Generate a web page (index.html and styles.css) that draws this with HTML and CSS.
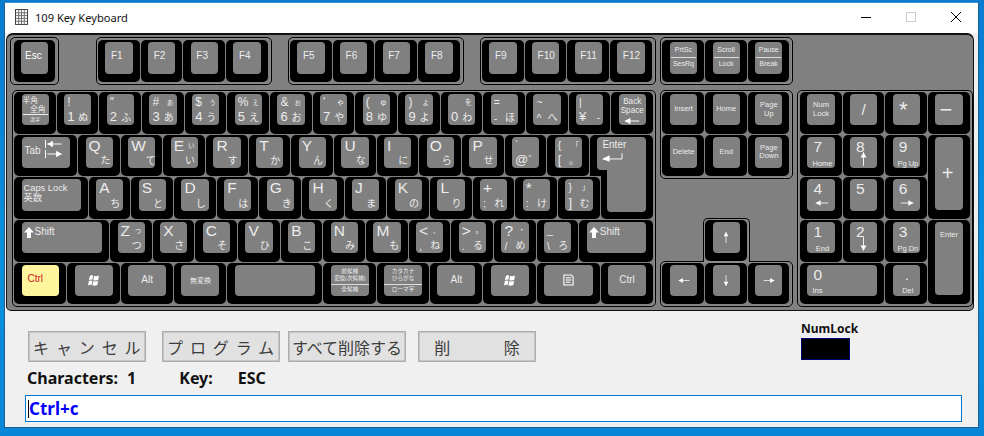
FILE: index.html
```html
<!DOCTYPE html>
<html lang="ja">
<head>
<meta charset="utf-8">
<title>109 Key Keyboard</title>
<link rel="stylesheet" href="styles.css">
</head>
<body>
<svg class="defs" width="0" height="0" aria-hidden="true">
  <symbol id="ar" viewBox="0 0 20 10"><path d="M1 5H19" stroke="#fff" stroke-width="1.2" fill="none"/><path d="M1 5L8 1V9Z" fill="#fff"/></symbol>
  <symbol id="fat" viewBox="0 0 10 11"><path d="M5 0L10 5.5H7V11H3V5.5H0Z" fill="#fff"/></symbol>
  <symbol id="win" viewBox="0 0 14 14"><path d="M3 2.2Q5 1 6.6 1.7L5.8 6.3Q4 5.6 2 6.7ZM7.6 2Q9.6 3 12.9 1.6L12.2 6.2Q9 7.5 6.9 6.6ZM1.9 7.7Q4 6.6 5.7 7.3L4.9 12Q3 11.2 1 12.3ZM6.7 7.6Q9 8.5 12 7.2L11.2 11.9Q8.5 13.2 5.9 12.2Z" fill="#fff"/></symbol>
  <symbol id="menu" viewBox="0 0 12 13"><path d="M1 1H9L11 3V12H1Z" fill="none" stroke="#fff" stroke-width="1.2"/><path d="M3 4H9M3 6.5H9M3 9H8" stroke="#fff" stroke-width="1.1"/></symbol>
</svg>
<div class="window">
  <header class="titlebar">
    <svg class="appicon" viewBox="0 0 14 17" aria-hidden="true"><rect x=".5" y=".5" width="13" height="16" fill="#fff" stroke="#333"/><path d="M1 4H13M1 7H13M1 10H13M1 13H13M4 1V16M7 1V16M10 1V16" stroke="#666"/></svg>
    <span class="title">109 Key Keyboard</span>
    <div class="winctl">
      <svg class="min" viewBox="0 0 10 10" aria-hidden="true"><path d="M0 5.5H10" stroke="#000"/></svg>
      <svg class="max" viewBox="0 0 10 10" aria-hidden="true"><rect x=".5" y=".5" width="9" height="9" fill="none" stroke="#ccc"/></svg>
      <svg class="close" viewBox="0 0 10 10" aria-hidden="true"><path d="M0 0L10 10M10 0L0 10" stroke="#000"/></svg>
    </div>
  </header>

  <section class="keyboard">
    <div class="toprow">
      <div class="cluster esc">
        <div class="row"><div class="cell u1"><div class="cap"><span class="ml fn esclabel">Esc</span></div></div></div>
      </div>
      <div class="cluster fkeys first">
        <div class="row">
          <div class="cell u1"><div class="cap"><span class="ml fn fk">F1</span></div></div>
          <div class="cell u1"><div class="cap"><span class="ml fn fk">F2</span></div></div>
          <div class="cell u1"><div class="cap"><span class="ml fn fk">F3</span></div></div>
          <div class="cell u1"><div class="cap"><span class="ml fn fk">F4</span></div></div>
        </div>
      </div>
      <div class="cluster fkeys">
        <div class="row">
          <div class="cell u1"><div class="cap"><span class="ml fn fk">F5</span></div></div>
          <div class="cell u1"><div class="cap"><span class="ml fn fk">F6</span></div></div>
          <div class="cell u1"><div class="cap"><span class="ml fn fk">F7</span></div></div>
          <div class="cell u1"><div class="cap"><span class="ml fn fk">F8</span></div></div>
        </div>
      </div>
      <div class="cluster fkeys">
        <div class="row">
          <div class="cell u1"><div class="cap"><span class="ml fn fk">F9</span></div></div>
          <div class="cell u1"><div class="cap"><span class="ml fn fk">F10</span></div></div>
          <div class="cell u1"><div class="cap"><span class="ml fn fk">F11</span></div></div>
          <div class="cell u1"><div class="cap"><span class="ml fn fk">F12</span></div></div>
        </div>
      </div>
      <div class="cluster sys">
        <div class="row">
          <div class="cell u1"><div class="cap stack"><span>PrtSc</span><span class="split">SesRq</span></div></div>
          <div class="cell u1"><div class="cap stack"><span>Scroll</span><span class="split">Lock</span></div></div>
          <div class="cell u1"><div class="cap stack"><span>Pause</span><span class="split">Break</span></div></div>
        </div>
      </div>
    </div>

    <div class="lower">
      <div class="cluster main">
        <div class="row">
          <div class="cell u1"><div class="cap hankaku"><span class="h1">半角</span><span class="h2">全角</span><span class="h3">漢字</span></div></div>
          <div class="cell u1"><div class="cap"><span class="tl sym">!</span><span class="bl num">1</span><span class="br kana">ぬ</span></div></div>
          <div class="cell u1"><div class="cap"><span class="tl sym">″</span><span class="bl num">2</span><span class="br kana">ふ</span></div></div>
          <div class="cell u1"><div class="cap"><span class="tl sym">#</span><span class="tr tiny">ぁ</span><span class="bl num">3</span><span class="br kana">あ</span></div></div>
          <div class="cell u1"><div class="cap"><span class="tl sym">$</span><span class="tr tiny">ぅ</span><span class="bl num">4</span><span class="br kana">う</span></div></div>
          <div class="cell u1"><div class="cap"><span class="tl sym">%</span><span class="tr tiny">ぇ</span><span class="bl num">5</span><span class="br kana">え</span></div></div>
          <div class="cell u1"><div class="cap"><span class="tl sym">&amp;</span><span class="tr tiny">ぉ</span><span class="bl num">6</span><span class="br kana">お</span></div></div>
          <div class="cell u1"><div class="cap"><span class="tl sym">'</span><span class="tr tiny">ゃ</span><span class="bl num">7</span><span class="br kana">や</span></div></div>
          <div class="cell u1"><div class="cap"><span class="tl sym">(</span><span class="tr tiny">ゅ</span><span class="bl num">8</span><span class="br kana">ゆ</span></div></div>
          <div class="cell u1"><div class="cap"><span class="tl sym">)</span><span class="tr tiny">ょ</span><span class="bl num">9</span><span class="br kana">よ</span></div></div>
          <div class="cell u1"><div class="cap"><span class="tr tiny">を</span><span class="bl num">0</span><span class="br kana">わ</span></div></div>
          <div class="cell u1"><div class="cap"><span class="tl small">=</span><span class="bl small">-</span><span class="br kana">ほ</span></div></div>
          <div class="cell u1"><div class="cap"><span class="tl small">~</span><span class="bl small">^</span><span class="br kana">へ</span></div></div>
          <div class="cell u1"><div class="cap"><span class="tl small">|</span><span class="bl num">¥</span><span class="br kana">-</span></div></div>
          <div class="cell u1"><div class="cap bs"><span>Back</span><span>Space</span><svg class="arrow wide" aria-hidden="true"><use href="#ar"/></svg></div></div>
        </div>
        <div class="row">
          <div class="cell u15"><div class="cap tab"><span class="fn">Tab</span><span class="tabarrows"><svg class="arrow wide flipbar" aria-hidden="true"><use href="#ar"/></svg><svg class="arrow wide right bar" aria-hidden="true"><use href="#ar"/></svg></span></div></div>
          <div class="cell u1"><div class="cap"><span class="tl big">Q</span><span class="br kana">た</span></div></div>
          <div class="cell u1"><div class="cap"><span class="tl big">W</span><span class="br kana">て</span></div></div>
          <div class="cell u1"><div class="cap"><span class="tl big">E</span><span class="tr tiny">ぃ</span><span class="br kana">い</span></div></div>
          <div class="cell u1"><div class="cap"><span class="tl big">R</span><span class="br kana">す</span></div></div>
          <div class="cell u1"><div class="cap"><span class="tl big">T</span><span class="br kana">か</span></div></div>
          <div class="cell u1"><div class="cap"><span class="tl big">Y</span><span class="br kana">ん</span></div></div>
          <div class="cell u1"><div class="cap"><span class="tl big">U</span><span class="br kana">な</span></div></div>
          <div class="cell u1"><div class="cap"><span class="tl big">I</span><span class="br kana">に</span></div></div>
          <div class="cell u1"><div class="cap"><span class="tl big">O</span><span class="br kana">ら</span></div></div>
          <div class="cell u1"><div class="cap"><span class="tl big">P</span><span class="br kana">せ</span></div></div>
          <div class="cell u1"><div class="cap"><span class="tl small">`</span><span class="bl num">@</span><span class="br kana">゛</span></div></div>
          <div class="cell u1"><div class="cap"><span class="tl small">{</span><span class="tr tiny">「</span><span class="bl num">[</span><span class="br kana">。</span></div></div>
          <div class="cell u15 enter-top"><div class="cap enter"><span class="fn">Enter</span><svg class="enterarrow" viewBox="0 0 22 10" aria-hidden="true"><path d="M1 6H21V0" fill="none" stroke="#fff"/><path d="M0 6L8 2V9Z" fill="#fff"/></svg></div></div>
        </div>
        <div class="row">
          <div class="cell u175"><div class="cap caps"><span>Caps Lock</span><span>英数</span></div></div>
          <div class="cell u1"><div class="cap"><span class="tl big">A</span><span class="br kana">ち</span></div></div>
          <div class="cell u1"><div class="cap"><span class="tl big">S</span><span class="br kana">と</span></div></div>
          <div class="cell u1"><div class="cap"><span class="tl big">D</span><span class="br kana">し</span></div></div>
          <div class="cell u1"><div class="cap"><span class="tl big">F</span><span class="br kana">は</span></div></div>
          <div class="cell u1"><div class="cap"><span class="tl big">G</span><span class="br kana">き</span></div></div>
          <div class="cell u1"><div class="cap"><span class="tl big">H</span><span class="br kana">く</span></div></div>
          <div class="cell u1"><div class="cap"><span class="tl big">J</span><span class="br kana">ま</span></div></div>
          <div class="cell u1"><div class="cap"><span class="tl big">K</span><span class="br kana">の</span></div></div>
          <div class="cell u1"><div class="cap"><span class="tl big">L</span><span class="br kana">り</span></div></div>
          <div class="cell u1"><div class="cap"><span class="tl big">+</span><span class="bl small">;</span><span class="br kana">れ</span></div></div>
          <div class="cell u1"><div class="cap"><span class="tl big">*</span><span class="bl small">:</span><span class="br kana">け</span></div></div>
          <div class="cell u1"><div class="cap"><span class="tl small">}</span><span class="tr tiny">」</span><span class="bl num">]</span><span class="br kana">む</span></div></div>
          <div class="cell u125 enter-bottom"></div>
        </div>
        <div class="row">
          <div class="cell u225"><div class="cap shift"><svg class="fat" aria-hidden="true"><use href="#fat"/></svg><span class="fn">Shift</span></div></div>
          <div class="cell u1"><div class="cap"><span class="tl big">Z</span><span class="tr tiny">っ</span><span class="br kana">つ</span></div></div>
          <div class="cell u1"><div class="cap"><span class="tl big">X</span><span class="br kana">さ</span></div></div>
          <div class="cell u1"><div class="cap"><span class="tl big">C</span><span class="br kana">そ</span></div></div>
          <div class="cell u1"><div class="cap"><span class="tl big">V</span><span class="br kana">ひ</span></div></div>
          <div class="cell u1"><div class="cap"><span class="tl big">B</span><span class="br kana">こ</span></div></div>
          <div class="cell u1"><div class="cap"><span class="tl big">N</span><span class="br kana">み</span></div></div>
          <div class="cell u1"><div class="cap"><span class="tl big">M</span><span class="br kana">も</span></div></div>
          <div class="cell u1"><div class="cap"><span class="tl big">&lt;</span><span class="tr tiny">、</span><span class="bl small">,</span><span class="br kana">ね</span></div></div>
          <div class="cell u1"><div class="cap"><span class="tl big">&gt;</span><span class="tr tiny">。</span><span class="bl small">.</span><span class="br kana">る</span></div></div>
          <div class="cell u1"><div class="cap"><span class="tl big">?</span><span class="tr tiny">・</span><span class="bl small">/</span><span class="br kana">め</span></div></div>
          <div class="cell u1"><div class="cap"><span class="tl small">_</span><span class="bl small">\</span><span class="br kana">ろ</span></div></div>
          <div class="cell u175"><div class="cap shift"><svg class="fat" aria-hidden="true"><use href="#fat"/></svg><span class="fn">Shift</span></div></div>
        </div>
        <div class="row">
          <div class="cell u125"><div class="cap lit"><span class="ml fn">Ctrl</span></div></div>
          <div class="cell u125"><div class="cap center"><svg class="win" aria-hidden="true"><use href="#win"/></svg></div></div>
          <div class="cell u125"><div class="cap center"><span class="fn">Alt</span></div></div>
          <div class="cell u125"><div class="cap center"><span class="mini">無変換</span></div></div>
          <div class="cell u225"><div class="cap"></div></div>
          <div class="cell u125"><div class="cap stackjp"><span>前候補</span><span>変換(次候補)</span><span class="split">全候補</span></div></div>
          <div class="cell u125"><div class="cap stackjp"><span>カタカナ</span><span>ひらがな</span><span class="split">ローマ字</span></div></div>
          <div class="cell u125"><div class="cap center"><span class="fn">Alt</span></div></div>
          <div class="cell u125"><div class="cap center"><svg class="win" aria-hidden="true"><use href="#win"/></svg></div></div>
          <div class="cell u15"><div class="cap center"><svg class="menu" aria-hidden="true"><use href="#menu"/></svg></div></div>
          <div class="cell u125"><div class="cap center"><span class="fn">Ctrl</span></div></div>
        </div>
      </div>

      <div class="navcol">
        <div class="cluster nav grid3">
          <div class="cell"><div class="cap center"><span class="fine">Insert</span></div></div>
          <div class="cell"><div class="cap center"><span class="fine">Home</span></div></div>
          <div class="cell"><div class="cap center"><span class="fine tc">Page<br>Up</span></div></div>
          <div class="cell"><div class="cap center"><span class="fine">Delete</span></div></div>
          <div class="cell"><div class="cap center"><span class="fine">End</span></div></div>
          <div class="cell"><div class="cap center"><span class="fine tc">Page<br>Down</span></div></div>
        </div>
        <div class="arrows">
          <div class="cluster upkey">
            <div class="cell u1"><div class="cap center"><svg class="arrow up" aria-hidden="true"><use href="#ar"/></svg></div></div>
          </div>
          <div class="cluster nav grid3 arrowrow">
            <div class="cell"><div class="cap center"><svg class="arrow" aria-hidden="true"><use href="#ar"/></svg></div></div>
            <div class="cell"><div class="cap center"><svg class="arrow down" aria-hidden="true"><use href="#ar"/></svg></div></div>
            <div class="cell"><div class="cap center"><svg class="arrow right" aria-hidden="true"><use href="#ar"/></svg></div></div>
          </div>
        </div>
      </div>

      <div class="cluster numpad">
        <div class="cell"><div class="cap center"><span class="fine tc">Num<br>Lock</span></div></div>
        <div class="cell"><div class="cap center"><span class="big">/</span></div></div>
        <div class="cell"><div class="cap center"><span class="op">*</span></div></div>
        <div class="cell"><div class="cap center"><span class="op">−</span></div></div>
        <div class="cell"><div class="cap pad"><span class="big">7</span><span class="fine low">Home</span></div></div>
        <div class="cell"><div class="cap pad"><span class="big">8</span><svg class="arrow up padarrow" aria-hidden="true"><use href="#ar"/></svg></div></div>
        <div class="cell"><div class="cap pad"><span class="big">9</span><span class="fine low">Pg Up</span></div></div>
        <div class="cell tall"><div class="cap center"><span class="op plus">+</span></div></div>
        <div class="cell"><div class="cap pad"><span class="big">4</span><svg class="arrow wide lowarrow" aria-hidden="true"><use href="#ar"/></svg></div></div>
        <div class="cell"><div class="cap pad"><span class="big">5</span></div></div>
        <div class="cell"><div class="cap pad"><span class="big">6</span><svg class="arrow wide right lowarrow" aria-hidden="true"><use href="#ar"/></svg></div></div>
        <div class="cell"><div class="cap pad"><span class="big">1</span><span class="fine low">End</span></div></div>
        <div class="cell"><div class="cap pad"><span class="big">2</span><svg class="arrow down padarrow" aria-hidden="true"><use href="#ar"/></svg></div></div>
        <div class="cell"><div class="cap pad"><span class="big">3</span><span class="fine low">Pg Dn</span></div></div>
        <div class="cell tall"><div class="cap top"><span class="fine">Enter</span></div></div>
        <div class="cell span2"><div class="cap pad"><span class="big">0</span><span class="fine low inslabel">Ins</span></div></div>
        <div class="cell"><div class="cap pad dot"><span class="fine">.</span><span class="fine low">Del</span></div></div>
      </div>
    </div>
  </section>

  <section class="controls">
    <div class="leftctl">
      <div class="buttons">
        <button class="btn spaced">キャンセル</button>
        <button class="btn spaced gap16">プログラム</button>
        <button class="btn gap8">すべて削除する</button>
        <button class="btn gap12 wide-word">削 除</button>
      </div>
      <div class="status">
        <span class="label">Characters:</span><span class="value">1</span>
        <span class="label key">Key:</span><span class="value esc-val">ESC</span>
      </div>
    </div>
    <div class="numlock">
      <span class="numlabel">NumLock</span>
      <div class="lamp"></div>
    </div>
  </section>
  <div class="inputbox"><span class="caret"></span><span class="typed">Ctrl+c</span></div>
</div>
</body>
</html>
```
FILE: styles.css
```css
:root { --u: 42.667px; --fg: #ececec; }
* { box-sizing: border-box; }
html, body { margin: 0; height: 100%; }
body {
  width: 984px; height: 436px; overflow: hidden;
  background: linear-gradient(180deg, #0a7cd0 0%, #0a90dc 60%, #0a86d8 100%);
  padding: 2px 0 0 4px;
  font-family: "Liberation Sans", "Noto Sans CJK JP", sans-serif;
}
.defs { position: absolute; }
.window {
  width: 975px; height: 426px;
  background: #f0f0f0;
  border: 1px solid #1b5f8c;
  border-top-color: #3a8fc8;
}
.titlebar {
  height: 30px; background: #fff;
  display: flex; align-items: center;
  padding-left: 10px;
}
.appicon { width: 13px; height: 16px; margin-top: -2px; }
.title { margin-left: 7px; font: 11.1px "Noto Sans", sans-serif; color: #111; margin-top: -2px; }
.winctl { margin-left: auto; display: flex; align-items: center; margin-top: -2px; padding-right: 17px; gap: 35px; }
.winctl svg { width: 10px; height: 10px; display: block; }

.keyboard {
  margin-left: 1px; width: 968px; height: 278px;
  background: #808080;
  border: 1px solid #111;
  border-top-width: 2px;
  border-radius: 7px 7px 5px 5px;
  padding: 2px 0 0 3px;
}
.toprow { display: flex; }
.lower { display: flex; margin: 5.33px 0 0 2px; }

.cluster {
  background: #808080;
  border: 1px solid #000;
  border-radius: 5px;
  box-shadow: inset 0 0 0 1px #8c8c8c;
}
.row { display: flex; }
.cell {
  height: calc(var(--u) - 1px);
  margin: 0 1px 1px 0;
  padding: 2px 7px 0 7.5px;
  background: #000;
  border-radius: 5px;
}
.u1 { width: calc(var(--u) - 1px); }
.u125 { width: calc(var(--u) * 1.25 - 1px); }
.u15 { width: calc(var(--u) * 1.5 - 1px); }
.u175 { width: calc(var(--u) * 1.75 - 1px); }
.u225 { width: calc(var(--u) * 2.25 - 1px); }

.esc { padding: 2px 2px 1px 2.5px; }
.fkeys { padding: 2px 2px 1px 1px; margin-left: 16.33px; }
.fkeys.first { margin-left: 36.83px; }
.sys { padding: 2px 2px 1px 1.5px; margin-left: 4.33px; }
.main { padding: 1px; }

.cap {
  position: relative;
  height: 31.5px;
  background: #808080;
  border-radius: 4px;
  color: var(--fg);
  display: grid;
  grid-template: 1fr 1fr / auto 1fr;
  padding: 1px 2px 2px 3px;
  line-height: 1;
  font-size: 10px;
  overflow: visible;
}
.tl { grid-area: 1 / 1; justify-self: start; }
.tr { grid-area: 1 / 2; justify-self: end; align-self: start; }
.bl { grid-area: 2 / 1; justify-self: start; align-self: end; }
.br { grid-area: 2 / 2; justify-self: end; align-self: end; }
.ml { grid-area: 1 / 1 / 3 / 3; align-self: center; margin-left: 1px; padding-bottom: 2px; }
.fk { margin-left: 2.5px; }
.esclabel { font-size: 9.5px; color: #fff; }
.big { font-size: 15.5px; font-weight: 400; }
.num { font-size: 13px; }
.sym { font-size: 12px; margin-top: 1px; }
.small { font-size: 10.5px; margin-top: 2px; }
.kana { font-size: 10px; margin-right: 1px; }
.tiny { font-size: 7.5px; margin: 4px 1px 0 0; }
.fn { font-size: 10px; }
.fine { font-size: 7.5px; line-height: 1.15; white-space: nowrap; }
.tc { text-align: center; }
.mini { font-size: 7px; }
.center { display: flex; align-items: center; justify-content: center; padding: 0; }
.lit { background: #fff59c; color: #c8141e; }
.lit .fn { margin-left: 3px; }

.stack {
  display: flex; flex-direction: column; align-items: center;
  padding: 4px 0 0; font-size: 7px;
}
.split {
  align-self: stretch; text-align: center;
  border-top: 1px solid #ddd;
  margin: 4px 1px 0; padding-top: 2px;
}
.hankaku { display: flex; flex-direction: column; padding: 2px 1px 0; }
.h1 { font-size: 7.8px; line-height: 9px; }
.h2 { font-size: 7.8px; line-height: 9px; align-self: flex-end; border-bottom: 1px solid #eee; margin: 0 0 1px; width: 100%; text-align: right; padding-right: 2px; }
.h3 { font-size: 5px; line-height: 7px; align-self: center; }
.bs { display: flex; flex-direction: column; align-items: center; padding: 3px 0 0; font-size: 8.2px; line-height: 9.5px; }
.bs .arrow { margin-top: 1px; flex: none; }
.tab { display: flex; padding: 1px 3px 0; gap: 4px; }
.tab .fn { margin-top: 8px; font-size: 10px; }
.tabarrows { display: flex; flex-direction: column; gap: 2px; margin-top: 2px; }
.bar { border-right: 1.5px solid #fff; }
.flipbar { border-left: 1.5px solid #fff; }
.caps { display: flex; flex-direction: column; padding: 5px 0 0 2px; font-size: 9.3px; line-height: 9.5px; }
.shift { display: flex; align-items: flex-start; padding: 5px 0 0 2px; gap: 1px; }
.shift .fn { font-size: 10px; margin-top: 0; }
.fat { width: 10px; height: 11px; }
.win { width: 13px; height: 13px; margin-top: 1px; }
.menu { width: 11px; height: 12px; }
.stackjp {
  display: flex; flex-direction: column; align-items: center;
  font-size: 5.6px; line-height: 7px;
  padding: 3px 0 0;
}
.stackjp .split { margin: 2px 0 0; padding-top: 1px; line-height: 6px; }

.arrow { width: 12px; height: 7px; display: block; }
.wide { width: 18px; height: 8px; }
.right { transform: scaleX(-1); }
.up { transform: rotate(90deg); }
.down { transform: rotate(-90deg); }

.enter-top { position: relative; z-index: 1; border-radius: 5px 5px 0 0; }
.enter-top::after {
  content: ""; position: absolute;
  left: 11px; right: 0; top: 100%; height: 2px; background: #000;
}
.enter {
  display: block; height: 33px; padding: 3px 0 0 5px;
  border-radius: 4px 4px 0 4px;
  z-index: 2;
}
.enter::after {
  content: ""; position: absolute;
  left: 10px; right: 0; top: 100%; height: 42px;
  background: #808080; border-radius: 0 0 4px 4px;
}
.enterarrow { display: block; width: 21px; height: 10px; margin-top: 3px; }
.enter-bottom { border-radius: 0 0 5px 5px; }

.navcol { display: flex; flex-direction: column; margin-left: 4px; width: 133.5px; }
.grid3 {
  display: grid;
  grid-template-columns: repeat(3, var(--u));
  padding: 1px 1px 1px 1.5px;
}
.grid3 .cell { margin: 0 1px 1px 0; }
.arrows { margin-top: auto; display: flex; flex-direction: column; }
.upkey {
  position: relative; z-index: 1;
  align-self: flex-start;
  margin: 0 0 -1.67px 43px;
  padding: 1px 1px 0 1.17px;
  border-bottom: 0;
  border-radius: 5px 5px 0 0;
}
.numpad {
  margin-left: 4px;
  display: grid;
  grid-template-columns: repeat(4, var(--u));
  grid-auto-rows: var(--u);
  padding: 1px 1px 1px 1.5px;
}
.numpad .cell { height: auto; }
.tall { grid-row: span 2; grid-column: 4; }
.tall .cap { height: 73px; }
.span2 { grid-column: span 2; }
.pad { display: flex; flex-direction: column; align-items: flex-start; padding: 2px 2px 0 6px; position: relative; }
.low { margin-top: auto; padding-bottom: 0; align-self: center; margin-left: -1px; }
.inslabel { align-self: flex-start; }
.padarrow { position: absolute; left: 6px; bottom: 5px; width: 15px; height: 8px; }
.lowarrow { margin-top: auto; margin-bottom: 4px; align-self: center; margin-left: -3px; width: 14px; }
.op { font-size: 22px; margin-left: -6px; }
.plus { font-size: 20px; font-weight: 400; margin-left: -3px; }
.top { display: block; padding: 7px 0 0; text-align: center; }
.dot .fine:first-child { font-size: 14px; align-self: center; margin: 0 0 0 -3px; }

.controls {
  display: flex;
  height: 84px;
  padding-left: 23px;
  position: relative;
}
.leftctl { padding-top: 20px; }
.buttons { display: flex; }
.btn {
  width: 118px; height: 31px;
  background: #e1e1e1;
  border: 1px solid #adadad;
  box-shadow: inset 0 0 0 1px #c4c4c4;
  padding: 0;
  font: 16px/1 "Noto Sans CJK JP", sans-serif;
  color: #3c3c3c;
  white-space: nowrap;
}
.spaced { letter-spacing: 6.9px; text-indent: 4px; }
.gap16 { margin-left: 16px; }
.gap8 { margin-left: 8px; }
.gap12 { margin-left: 12px; }
.wide-word { word-spacing: 50px; }
.status {
  display: flex; align-items: baseline;
  margin: 7px 0 0 -1px;
  font: 700 16px/18px "Noto Sans", sans-serif; color: #111;
}
.value { margin-left: 9px; }
.key { margin-left: 43px; }
.esc-val { margin-left: 25px; }
.numlock {
  position: absolute; left: 796px; top: 10px;
  display: flex; flex-direction: column;
}
.numlabel { font: 700 12px/16px "Noto Sans", sans-serif; color: #111; }
.lamp { width: 49px; height: 22px; background: #000; border: 1px solid #00006e; margin-top: 1px; }
.inputbox {
  margin-left: 20px;
  width: 937px; height: 27px;
  background: #fff;
  border: 1px solid #0078d7;
  display: flex; align-items: center;
  padding-left: 2px;
  font: 700 17px/1 "Noto Sans", sans-serif;
  color: #0000ff;
}
.caret { width: 1px; height: 18px; background: #000; }
.typed { margin-left: 0; }
```
